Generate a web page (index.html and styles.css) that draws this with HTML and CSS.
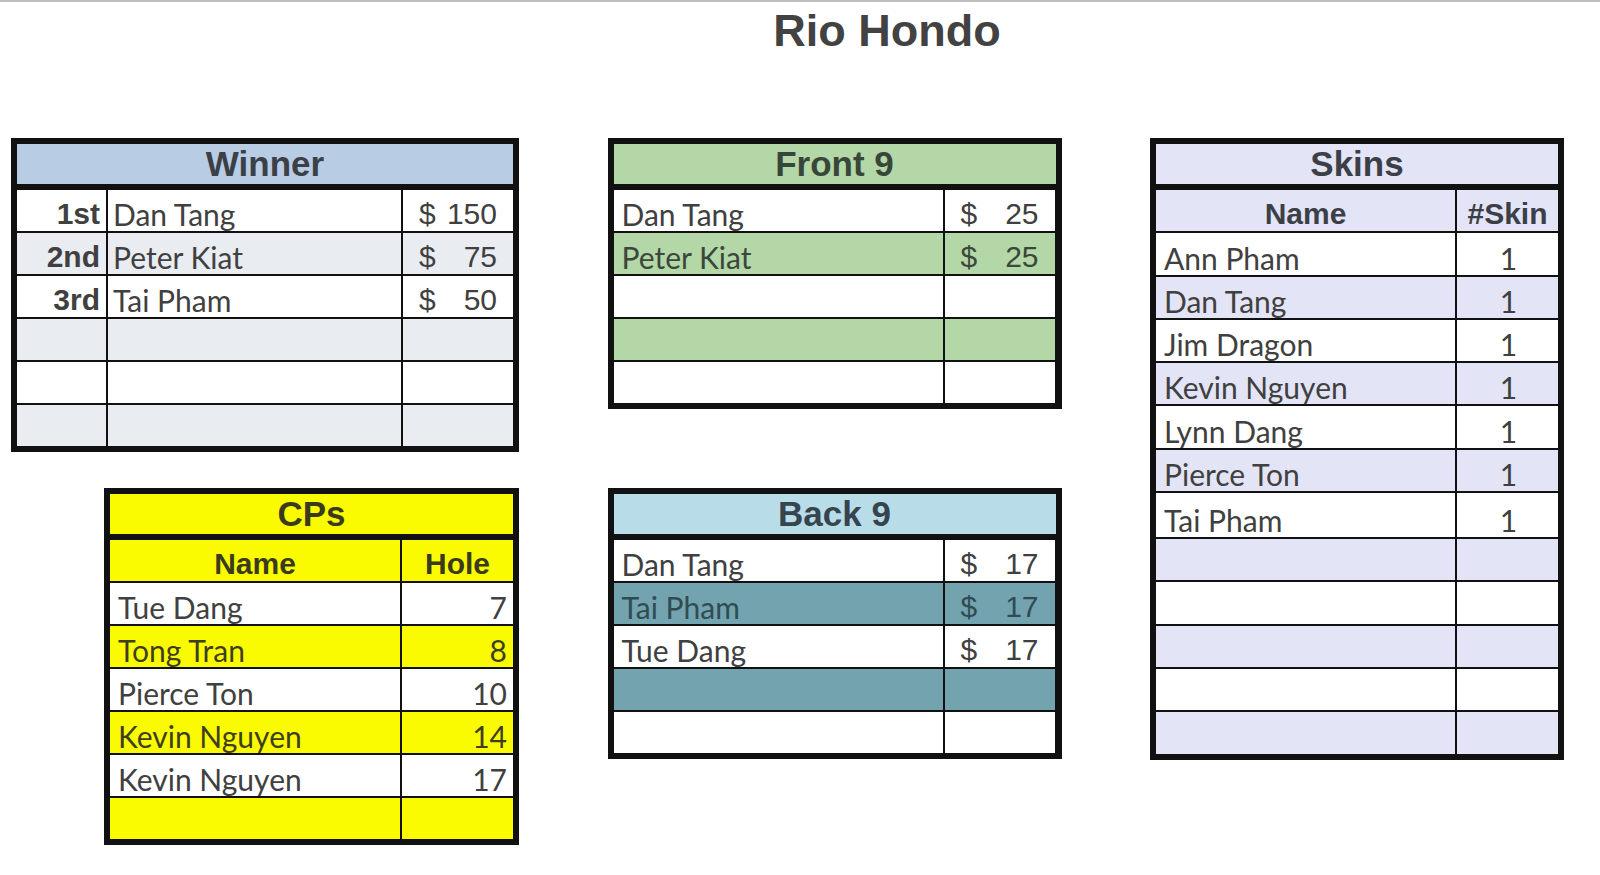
FILE: index.html
```html
<!DOCTYPE html>
<html lang="en">
<head>
<meta charset="utf-8">
<title>Rio Hondo</title>
<link rel="stylesheet" href="styles.css">
</head>
<body>
<div class="page">
  <h1 class="title">Rio Hondo</h1>
  <div class="boards">
    <div class="col col-left">
      <section class="sheet winner">
        <div class="sheet-head">Winner</div>
        <div class="row">
          <div class="cell rank">1st</div><div class="cell name">Dan Tang</div><div class="cell money"><span>$</span><span>150</span></div>
        </div>
        <div class="row alt">
          <div class="cell rank">2nd</div><div class="cell name">Peter Kiat</div><div class="cell money"><span>$</span><span>75</span></div>
        </div>
        <div class="row">
          <div class="cell rank">3rd</div><div class="cell name">Tai Pham</div><div class="cell money"><span>$</span><span>50</span></div>
        </div>
        <div class="row alt"><div class="cell"></div><div class="cell"></div><div class="cell"></div></div>
        <div class="row"><div class="cell"></div><div class="cell"></div><div class="cell"></div></div>
        <div class="row alt"><div class="cell"></div><div class="cell"></div><div class="cell"></div></div>
      </section>

      <section class="sheet cps">
        <div class="sheet-head">CPs</div>
        <div class="row alt sub">
          <div class="cell center">Name</div><div class="cell center">Hole</div>
        </div>
        <div class="row"><div class="cell name">Tue Dang</div><div class="cell num">7</div></div>
        <div class="row alt"><div class="cell name">Tong Tran</div><div class="cell num">8</div></div>
        <div class="row"><div class="cell name">Pierce Ton</div><div class="cell num">10</div></div>
        <div class="row alt"><div class="cell name">Kevin Nguyen</div><div class="cell num">14</div></div>
        <div class="row"><div class="cell name">Kevin Nguyen</div><div class="cell num">17</div></div>
        <div class="row alt"><div class="cell"></div><div class="cell"></div></div>
      </section>
    </div>

    <div class="col col-mid">
      <section class="sheet front">
        <div class="sheet-head">Front 9</div>
        <div class="row"><div class="cell name">Dan Tang</div><div class="cell money"><span>$</span><span>25</span></div></div>
        <div class="row alt"><div class="cell name">Peter Kiat</div><div class="cell money"><span>$</span><span>25</span></div></div>
        <div class="row"><div class="cell"></div><div class="cell"></div></div>
        <div class="row alt"><div class="cell"></div><div class="cell"></div></div>
        <div class="row"><div class="cell"></div><div class="cell"></div></div>
      </section>

      <section class="sheet back">
        <div class="sheet-head">Back 9</div>
        <div class="row"><div class="cell name">Dan Tang</div><div class="cell money"><span>$</span><span>17</span></div></div>
        <div class="row alt"><div class="cell name">Tai Pham</div><div class="cell money"><span>$</span><span>17</span></div></div>
        <div class="row"><div class="cell name">Tue Dang</div><div class="cell money"><span>$</span><span>17</span></div></div>
        <div class="row alt"><div class="cell"></div><div class="cell"></div></div>
        <div class="row"><div class="cell"></div><div class="cell"></div></div>
      </section>
    </div>

    <div class="col col-right">
      <section class="sheet skins">
        <div class="sheet-head">Skins</div>
        <div class="row alt sub">
          <div class="cell center">Name</div><div class="cell center">#Skin</div>
        </div>
        <div class="row"><div class="cell name">Ann Pham</div><div class="cell center num-c">1</div></div>
        <div class="row alt"><div class="cell name">Dan Tang</div><div class="cell center num-c">1</div></div>
        <div class="row"><div class="cell name">Jim Dragon</div><div class="cell center num-c">1</div></div>
        <div class="row alt"><div class="cell name">Kevin Nguyen</div><div class="cell center num-c">1</div></div>
        <div class="row"><div class="cell name">Lynn Dang</div><div class="cell center num-c">1</div></div>
        <div class="row alt"><div class="cell name">Pierce Ton</div><div class="cell center num-c">1</div></div>
        <div class="row tall"><div class="cell name">Tai Pham</div><div class="cell center num-c">1</div></div>
        <div class="row alt"><div class="cell"></div><div class="cell"></div></div>
        <div class="row"><div class="cell"></div><div class="cell"></div></div>
        <div class="row alt"><div class="cell"></div><div class="cell"></div></div>
        <div class="row"><div class="cell"></div><div class="cell"></div></div>
        <div class="row alt"><div class="cell"></div><div class="cell"></div></div>
      </section>
    </div>
  </div>
</div>
</body>
</html>
```

FILE: styles.css
```css
* { box-sizing: border-box; }

html, body {
  margin: 0;
  padding: 0;
  background: #ffffff;
}

body {
  border-top: 2px solid #bfbfbf;
  font-family: "Lato", "Liberation Sans", sans-serif;
  color: #404040;
}

.page {
  width: 1600px;
}

.title {
  margin: 3px 0 0;
  padding-left: 174px;
  text-align: center;
  font-family: "Liberation Sans", Arial, sans-serif;
  font-weight: 700;
  font-size: 45px;
  line-height: 52px;
  color: #424242;
}

.boards {
  display: grid;
  grid-template-columns: 508px 454px 414px;
  column-gap: 88.5px;
  padding-left: 11px;
  margin-top: 81px;
  align-items: start;
}

.col {
  display: flex;
  flex-direction: column;
}

.col-left {
  align-items: flex-end;
  gap: 36px;
}

.col-mid {
  gap: 79px;
}

/* sheet box */
.sheet {
  display: flex;
  flex-direction: column;
  gap: 2px;
  border: 6px solid #111111;
  background: #111111;
}

.sheet-head {
  height: 40px;
  margin-bottom: 4px;
  text-align: center;
  font-family: "Liberation Sans", Arial, sans-serif;
  font-weight: 700;
  font-size: 35px;
  line-height: 40px;
  color: #3b4047;
}

.row {
  display: grid;
  column-gap: 2px;
  height: 41px;
}

.cell {
  display: flex;
  align-items: flex-end;
  height: 100%;
  padding-bottom: 2px;
  font-size: 30px;
  line-height: 30px;
  white-space: nowrap;
  overflow: hidden;
  background: #ffffff;
}

.cell.name {
  padding-left: 8px;
}

.cell.rank {
  justify-content: flex-end;
  padding-right: 6px;
  font-family: "Liberation Sans", Arial, sans-serif;
  font-weight: 700;
}

.cell.money {
  justify-content: space-between;
  padding-left: 16px;
  padding-right: 16px;
  font-family: "Liberation Sans", Arial, sans-serif;
}

.cell.num {
  justify-content: flex-end;
  padding-right: 6px;
}

.cell.center {
  justify-content: center;
}

.sub .cell {
  font-family: "Liberation Sans", Arial, sans-serif;
  font-weight: 700;
  color: #3b4047;
}

/* Winner */
.winner { width: 508px; }
.winner .row { grid-template-columns: 89px 293px 110px; }
.winner .cell.name { padding-left: 5px; }
.winner .sheet-head { background: #b8cce4; }
.winner .alt .cell { background: #e9ecf1; }

/* CPs */
.cps { width: 415px; }
.cps .row { grid-template-columns: 290px 111px; }
.cps .sheet-head { background: #fbfb00; color: #3a3a1c; }
.cps .alt .cell { background: #fbfb00; color: #3e3e20; }
.cps .sub .cell { color: #3a3a1c; }

/* Front 9 */
.front { width: 454px; }
.front .row { grid-template-columns: 329px 110px; }
.front .sheet-head { background: #b4d7a8; color: #38463a; }
.front .alt .cell { background: #b4d7a8; color: #3a473b; }

/* Back 9 */
.back { width: 454px; }
.back .row { grid-template-columns: 329px 110px; }
.back .sheet-head { background: #b8dde9; color: #36444d; }
.back .alt .cell { background: #73a3af; color: #2f4c53; }

/* Skins */
.skins { width: 414px; }
.skins .row { grid-template-columns: 299px 101px; height: 41.3px; }
.skins .row.tall { height: 44px; }
.skins .sheet-head { background: #e4e4f7; }
.skins .alt .cell { background: #e4e4f7; }
.skins .num-c { padding-left: 2px; }
```
